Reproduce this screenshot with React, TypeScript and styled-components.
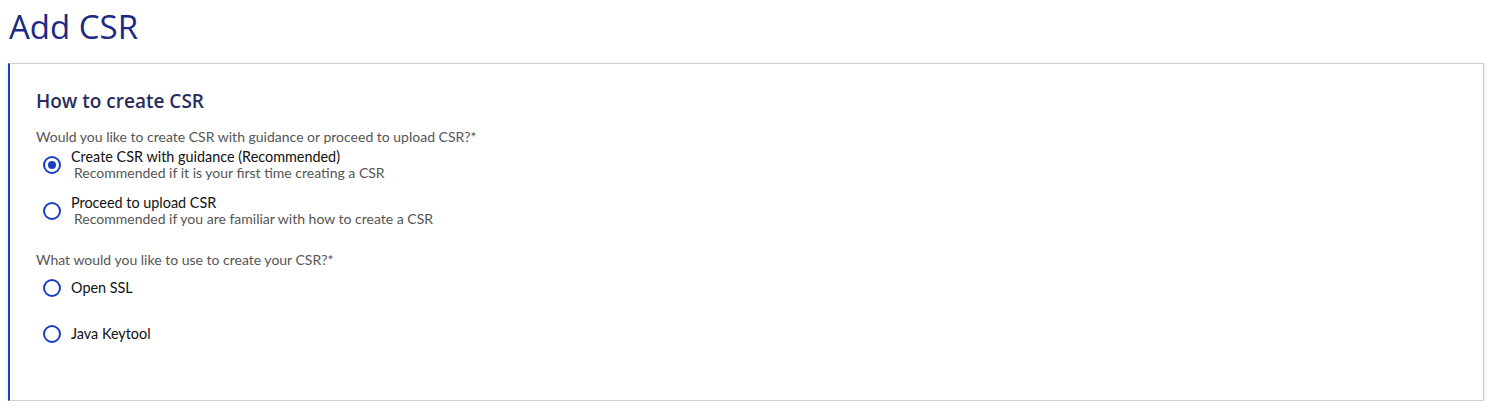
import React, { useState } from "react";
import styled, { createGlobalStyle } from "styled-components";

const GlobalStyle = createGlobalStyle`
  body {
    margin: 0;
    background: #ffffff;
    font-family: "Lato", "Open Sans", sans-serif;
  }
`;

type Option = { id: string; label: string; hint?: string };

const howOptions: Option[] = [
  {
    id: "guided",
    label: "Create CSR with guidance (Recommended)",
    hint: "Recommended if it is your first time creating a CSR",
  },
  {
    id: "upload",
    label: "Proceed to upload CSR",
    hint: "Recommended if you are familiar with how to create a CSR",
  },
];

const toolOptions: Option[] = [
  { id: "openssl", label: "Open SSL" },
  { id: "keytool", label: "Java Keytool" },
];

const App: React.FC = () => {
  const [how, setHow] = useState("guided");
  const [tool, setTool] = useState("");

  return (
    <Page>
      <GlobalStyle />
      <Title>Add CSR</Title>
      <Card>
        <CardTitle>How to create CSR</CardTitle>

        <Question>Would you like to create CSR with guidance or proceed to upload CSR?*</Question>
        <OptionList>
          {howOptions.map((opt) => (
            <OptionRow key={opt.id} onClick={() => setHow(opt.id)}>
              <Radio $checked={how === opt.id} />
              <OptionText>
                <OptionLabel>{opt.label}</OptionLabel>
                {opt.hint && <OptionHint>{opt.hint}</OptionHint>}
              </OptionText>
            </OptionRow>
          ))}
        </OptionList>

        <Question $spaced>What would you like to use to create your CSR?*</Question>
        <OptionList>
          {toolOptions.map((opt) => (
            <OptionRow key={opt.id} onClick={() => setTool(opt.id)}>
              <Radio $checked={tool === opt.id} />
              <OptionText>
                <OptionLabel>{opt.label}</OptionLabel>
              </OptionText>
            </OptionRow>
          ))}
        </OptionList>
      </Card>
    </Page>
  );
};

const Page = styled.div`
  padding: 4px 20px 0 8px;
`;

const Title = styled.h1`
  margin: 0 0 14px 1px;
  font-family: "Open Sans", "Noto Sans", sans-serif;
  font-weight: 400;
  font-size: 33px;
  line-height: 45px;
  color: #1c2a85;
`;

const Card = styled.section`
  background: #ffffff;
  border: 1px solid #cfcfcf;
  border-left: 2px solid #1a3fb8;
  box-shadow: 0 1px 4px rgba(0, 0, 0, 0.12);
  padding: 24px 26px 50px 26px;
`;

const CardTitle = styled.h2`
  margin: 0 0 14px;
  font-family: "Open Sans", "Noto Sans", sans-serif;
  font-weight: 600;
  font-size: 19px;
  line-height: 26px;
  color: #2a2d5c;
`;

const Question = styled.p<{ $spaced?: boolean }>`
  margin: ${(p) => (p.$spaced ? "24px" : "0")} 0 2px;
  font-size: 14px;
  line-height: 18px;
  color: #555555;
`;

const OptionList = styled.div`
  display: flex;
  flex-direction: column;
  gap: 13px;
`;

const OptionRow = styled.label`
  display: flex;
  align-items: center;
  min-height: 33px;
  gap: 10px;
  cursor: pointer;
`;

const Radio = styled.span<{ $checked: boolean }>`
  flex: none;
  box-sizing: border-box;
  width: 18px;
  height: 18px;
  margin-left: 7px;
  border: 2px solid #1a3fc4;
  border-radius: 50%;
  display: flex;
  align-items: center;
  justify-content: center;

  &::after {
    content: "";
    width: 8px;
    height: 8px;
    border-radius: 50%;
    background: ${(p) => (p.$checked ? "#1a3fc4" : "transparent")};
  }
`;

const OptionText = styled.div`
  display: flex;
  flex-direction: column;
`;

const OptionLabel = styled.span`
  font-size: 14.4px;
  line-height: 17px;
  color: #111111;
`;

const OptionHint = styled.span`
  padding-left: 3px;
  font-size: 14px;
  line-height: 16px;
  color: #555555;
`;

export default App;
